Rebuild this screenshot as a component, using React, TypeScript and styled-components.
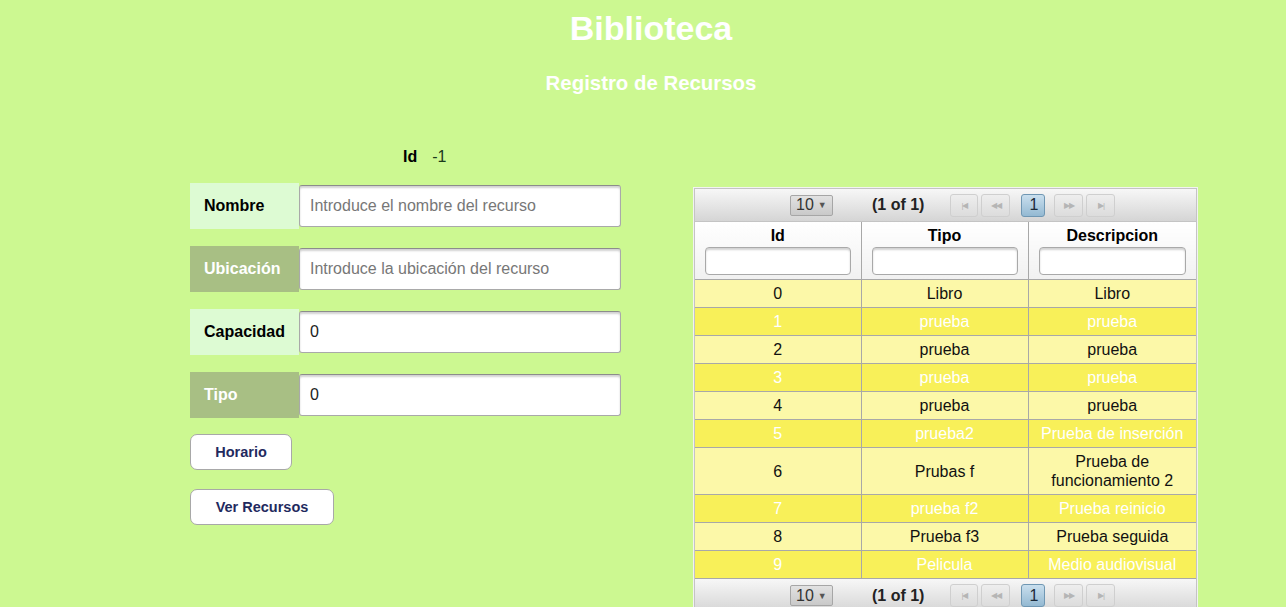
import React from 'react';
import styled, { createGlobalStyle } from 'styled-components';

const Colors = {
  bg: '#CCF891',
  labelLight: '#DDFBD3',
  labelDark: '#A8BF84',
  rowLight: '#FCF8A8',
  rowBright: '#F8F059',
  grid: '#A8A8A8',
  navy: '#1F2A5E',
};

const GlobalStyle = createGlobalStyle`
  * { margin: 0; padding: 0; box-sizing: border-box; }
  body {
    background: ${Colors.bg};
    font-family: 'Liberation Sans', Arial, sans-serif;
    color: #000;
    overflow: hidden;
  }
`;

const Page = styled.div`
  width: 1286px;
  height: 607px;
  overflow: hidden;
`;

const Header = styled.header`
  padding-left: 16px;
  text-align: center;
  color: #fff;
`;

const Title = styled.h1`
  font-size: 34px;
  line-height: 38px;
  padding-top: 9px;
`;

const Subtitle = styled.h3`
  font-size: 20.4px;
  line-height: 23px;
  margin-top: 25px;
`;

const Main = styled.div`
  display: flex;
  align-items: flex-start;
  gap: 72px;
  padding-left: 190px;
  margin-top: 52px;
`;

const FormCol = styled.div`
  width: 431px;
  display: flex;
  flex-direction: column;
`;

const IdLine = styled.div`
  display: flex;
  align-items: center;
  gap: 15px;
  height: 20px;
  padding-left: 213px;
  font-size: 16px;
  b { font-weight: bold; }
  span { color: #1b3a1b; }
`;

const FieldRow = styled.div<{ $first?: boolean }>`
  display: grid;
  grid-template-columns: 109px 322px;
  align-items: center;
  height: 46px;
  margin-top: ${p => (p.$first ? 16 : 17)}px;
`;

const Label = styled.label<{ $dark?: boolean }>`
  height: 46px;
  display: flex;
  align-items: center;
  padding-left: 14px;
  font-size: 16px;
  font-weight: bold;
  background: ${p => (p.$dark ? Colors.labelDark : Colors.labelLight)};
  color: ${p => (p.$dark ? '#fff' : '#000')};
`;

const TextInput = styled.input`
  height: 42px;
  width: 322px;
  border: 1px solid #a9a9a9;
  border-top-color: #8c8c8c;
  border-radius: 3px;
  box-shadow: inset 0 2px 2px rgba(0, 0, 0, 0.18);
  background: #fff;
  padding: 0 10px;
  font-family: inherit;
  font-size: 16px;
  color: #222;
  outline: none;
  &::placeholder { color: #777; }
`;

const Button = styled.button<{ $w: number; $gap: number }>`
  width: ${p => p.$w}px;
  height: 36px;
  margin-top: ${p => p.$gap}px;
  border: 1px solid #a8a8a8;
  border-radius: 7px;
  background: #fff;
  color: ${Colors.navy};
  font-family: inherit;
  font-size: 14.5px;
  font-weight: bold;
  cursor: pointer;
`;

const TableWrap = styled.div`
  margin-top: 40px;
  width: 505px;
  border: 1px solid #f2f2f2;
  background: #fff;
`;

const Inner = styled.div`
  border: 1px solid #c4c4c4;
`;

const Paginator = styled.div<{ $bottom?: boolean }>`
  height: 33px;
  display: flex;
  align-items: center;
  padding-left: 95px;
  background: linear-gradient(#f7f7f7, #d5d5d5);
  border-bottom: ${p => (p.$bottom ? 'none' : '1px solid #c4c4c4')};
  font-size: 16px;
  color: #222;
`;

const PageSelect = styled.div`
  width: 43px;
  height: 21px;
  border: 1px solid #a6a6a6;
  border-radius: 2px;
  background: linear-gradient(#e2e2e2, #c9c9c9);
  display: flex;
  align-items: center;
  padding-left: 5px;
  font-size: 16px;
  color: #333;
  gap: 4px;
  i { font-style: normal; font-size: 9px; color: #555; }
`;

const PageInfo = styled.span`
  margin-left: 39px;
  margin-right: 26px;
  font-weight: bold;
`;

const NavBtn = styled.div<{ $active?: boolean; $w?: number; $ml?: number }>`
  width: ${p => p.$w ?? 29}px;
  height: 23px;
  margin-left: ${p => p.$ml ?? 3}px;
  border: 1px solid ${p => (p.$active ? '#6f97b3' : '#cfcfcf')};
  border-radius: 3px;
  background: ${p => (p.$active ? 'linear-gradient(#c9dfee, #94b9d2)' : 'linear-gradient(#eeeeee, #dcdcdc)')};
  display: flex;
  align-items: center;
  justify-content: center;
  font-size: ${p => (p.$active ? 16 : 8)}px;
  color: ${p => (p.$active ? '#1b2a3a' : '#b5b5b5')};
  letter-spacing: -1px;
`;

const Table = styled.table`
  width: 100%;
  border-collapse: collapse;
  table-layout: fixed;
`;

const Col = styled.col<{ $w: number }>`
  width: ${p => p.$w}px;
`;

const Th = styled.th`
  border: 1px solid ${Colors.grid};
  border-top: none;
  padding: 4px 10px;
  background: linear-gradient(#ffffff, #f1f1f1);
  font-size: 16px;
  font-weight: bold;
  line-height: 19px;
  &:first-child { border-left: none; }
  &:last-child { border-right: none; }
`;

const Filter = styled.input`
  display: block;
  width: 100%;
  height: 28px;
  margin-top: 2px;
  border: 1px solid #a9a9a9;
  border-radius: 4px;
  box-shadow: inset 0 2px 2px rgba(0, 0, 0, 0.18);
  outline: none;
`;

const Tr = styled.tr<{ $bright: boolean }>`
  background: ${p => (p.$bright ? Colors.rowBright : Colors.rowLight)};
  color: ${p => (p.$bright ? '#fff' : '#111')};
`;

const Td = styled.td`
  border: 1px solid ${Colors.grid};
  padding: 4px 8px;
  font-size: 16px;
  line-height: 19px;
  text-align: center;
  &:first-child { border-left: none; }
  &:last-child { border-right: none; }
`;

const rows = [
  ['0', 'Libro', 'Libro'],
  ['1', 'prueba', 'prueba'],
  ['2', 'prueba', 'prueba'],
  ['3', 'prueba', 'prueba'],
  ['4', 'prueba', 'prueba'],
  ['5', 'prueba2', 'Prueba de inserción'],
  ['6', 'Prubas f', 'Prueba de funcionamiento 2'],
  ['7', 'prueba f2', 'Prueba reinicio'],
  ['8', 'Prueba f3', 'Prueba seguida'],
  ['9', 'Pelicula', 'Medio audiovisual'],
];

const fields = [
  { label: 'Nombre', placeholder: 'Introduce el nombre del recurso', value: '' },
  { label: 'Ubicación', placeholder: 'Introduce la ubicación del recurso', value: '' },
  { label: 'Capacidad', placeholder: '', value: '0' },
  { label: 'Tipo', placeholder: '', value: '0' },
];

const PagerBar = ({ bottom }: { bottom?: boolean }) => (
  <Paginator $bottom={bottom}>
    <PageSelect>10 <i>▼</i></PageSelect>
    <PageInfo>(1 of 1)</PageInfo>
    <NavBtn $ml={0} $w={28}>|◀</NavBtn>
    <NavBtn>◀◀</NavBtn>
    <NavBtn $active $w={24} $ml={11}>1</NavBtn>
    <NavBtn $ml={9}>▶▶</NavBtn>
    <NavBtn>▶|</NavBtn>
  </Paginator>
);

export default function App() {
  return (
    <Page>
      <GlobalStyle />
      <Header>
        <Title>Biblioteca</Title>
        <Subtitle>Registro de Recursos</Subtitle>
      </Header>
      <Main>
        <FormCol>
          <IdLine>
            <b>Id</b>
            <span>-1</span>
          </IdLine>
          {fields.map((f, i) => (
            <FieldRow key={f.label} $first={i === 0}>
              <Label $dark={i % 2 === 1}>{f.label}</Label>
              <TextInput placeholder={f.placeholder} defaultValue={f.value} />
            </FieldRow>
          ))}
          <div>
            <Button $w={102} $gap={16}>Horario</Button>
          </div>
          <div>
            <Button $w={144} $gap={19}>Ver Recursos</Button>
          </div>
        </FormCol>

        <TableWrap>
          <Inner>
            <PagerBar />
            <Table>
              <colgroup>
                <Col $w={166} />
                <Col $w={167} />
                <Col $w={168} />
              </colgroup>
              <thead>
                <tr>
                  <Th>Id<Filter /></Th>
                  <Th>Tipo<Filter /></Th>
                  <Th>Descripcion<Filter /></Th>
                </tr>
              </thead>
              <tbody>
                {rows.map((r, i) => (
                  <Tr key={r[0]} $bright={i % 2 === 1}>
                    <Td>{r[0]}</Td>
                    <Td>{r[1]}</Td>
                    <Td>{r[2]}</Td>
                  </Tr>
                ))}
              </tbody>
            </Table>
            <PagerBar bottom />
          </Inner>
        </TableWrap>
      </Main>
    </Page>
  );
}
